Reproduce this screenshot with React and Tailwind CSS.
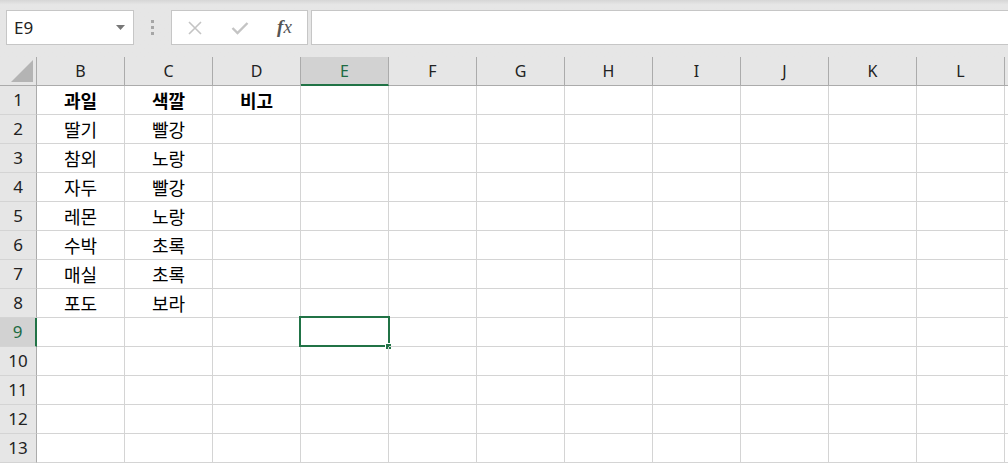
const COLS = ["B", "C", "D", "E", "F", "G", "H", "I", "J", "K", "L", ""];

const DATA = [
  ["과일", "색깔", "비고"],
  ["딸기", "빨강"],
  ["참외", "노랑"],
  ["자두", "빨강"],
  ["레몬", "노랑"],
  ["수박", "초록"],
  ["매실", "초록"],
  ["포도", "보라"],
];

const font = { fontFamily: '"Noto Sans", "Noto Sans CJK KR", sans-serif' };
const krFont = { fontFamily: '"Noto Sans CJK KR", sans-serif' };

function FormulaBar() {
  return (
    <div className="
      h-[57px]
      flex items-start
      pt-[10px]
      bg-gradient-to-b from-[#d6d6d6] via-[#e6e6e6] via-[8%] to-[#e6e6e6]
    ">

      {/* NAME BOX */}

      <div className="
        ml-[6px]
        w-[128px] h-[35px]
        bg-white
        border border-[#c6c6c6]
        flex items-center
        pl-[7px] pr-[8px]
      ">
        <span className="text-[17px] text-[#222] flex-1" style={font}>E9</span>
        <svg width="9" height="5" viewBox="0 0 9 5">
          <path d="M0 0 L9 0 L4.5 5 Z" fill="#777" />
        </svg>
      </div>

      {/* DOTS */}

      <div className="w-[37px] h-[35px] flex flex-col items-center justify-center gap-[3px]">
        <div className="w-[3px] h-[3px] bg-[#a6a6a6]" />
        <div className="w-[3px] h-[3px] bg-[#a6a6a6]" />
        <div className="w-[3px] h-[3px] bg-[#a6a6a6]" />
      </div>

      {/* BUTTONS */}

      <div className="
        w-[137px] h-[35px]
        bg-white
        border border-[#c6c6c6]
        flex items-center
      ">
        <div className="w-[45px] flex justify-center">
          <svg width="16" height="16" viewBox="0 0 16 16">
            <path d="M2 2 L14 14 M14 2 L2 14" stroke="#c4c4c4" strokeWidth="1.6" />
          </svg>
        </div>
        <div className="w-[45px] flex justify-center">
          <svg width="18" height="14" viewBox="0 0 18 14">
            <path d="M1.5 7 L6.5 12 L16.5 2" stroke="#c4c4c4" strokeWidth="2.4" fill="none" />
          </svg>
        </div>
        <div className="
          w-[45px] flex justify-center
          text-[19px] italic text-[#555]
        " style={{ fontFamily: '"Liberation Serif", serif' }}>
          <span className="font-bold">f</span><span>x</span>
        </div>
      </div>

      {/* INPUT */}

      <div className="
        ml-[3px]
        flex-1 h-[35px]
        bg-white
        border border-[#c6c6c6] border-r-0
      " />
    </div>
  );
}

function HeaderRow() {
  return (
    <div className="flex h-[29px] bg-[#e6e6e6] border-b border-[#ababab]">

      {/* CORNER */}

      <div className="w-[37px] shrink-0 border-r border-[#ababab] flex items-end justify-end pr-[3px] pb-[3px]">
        <svg width="22" height="22" viewBox="0 0 22 22">
          <path d="M22 0 L22 22 L0 22 Z" fill="#b4b4b4" />
        </svg>
      </div>

      {COLS.map((c, i) => {
        const active = c === "E";
        return (
          <div
            key={i}
            className={`
              w-[88px] shrink-0
              flex items-center justify-center
              text-[16px]
              ${active
                ? "bg-[#d2d2d2] text-[#1e6b43] border-b-2 border-[#217346] -mb-px border-r border-r-[#ababab]"
                : "text-[#222] border-r border-[#ababab]"}
            `}
            style={font}
          >
            {c}
          </div>
        );
      })}
    </div>
  );
}

function Row({ n }) {
  const values = DATA[n - 1] || [];
  const active = n === 9;
  return (
    <div className="flex h-[29px]">

      {/* ROW NUMBER */}

      <div
        className={`
          w-[37px] shrink-0
          flex items-center justify-center
          text-[17px]
          border-b border-[#d4d4d4]
          ${active
            ? "bg-[#d2d2d2] text-[#1e6b43] border-r-2 border-r-[#217346]"
            : "bg-[#e6e6e6] text-[#222] border-r border-r-[#ababab]"}
        `}
        style={font}
      >
        {n}
      </div>

      {COLS.map((c, i) => {
        const selected = active && c === "E";
        return (
          <div
            key={i}
            className={`
              relative
              w-[88px] shrink-0
              flex items-center justify-center
              border-r border-b border-[#d4d4d4]
              text-[18px] text-black
              ${n === 1 ? "font-bold" : ""}
            `}
            style={krFont}
          >
            {values[i] || ""}

            {selected && (
              <>
                <div className="absolute left-[-2px] top-[-2px] w-[91px] h-[31px] border-2 border-[#217346]" />
                <div className="absolute right-[-4px] bottom-[-4px] w-[7px] h-[7px] bg-[#217346] border border-white" />
              </>
            )}
          </div>
        );
      })}
    </div>
  );
}

export default function App() {
  const rows = Array.from({ length: 13 }, (_, i) => i + 1);
  return (
    <div className="w-[1008px] h-[463px] overflow-hidden bg-white">
      <FormulaBar />
      <HeaderRow />
      {rows.map((n) => (
        <Row key={n} n={n} />
      ))}
    </div>
  );
}
